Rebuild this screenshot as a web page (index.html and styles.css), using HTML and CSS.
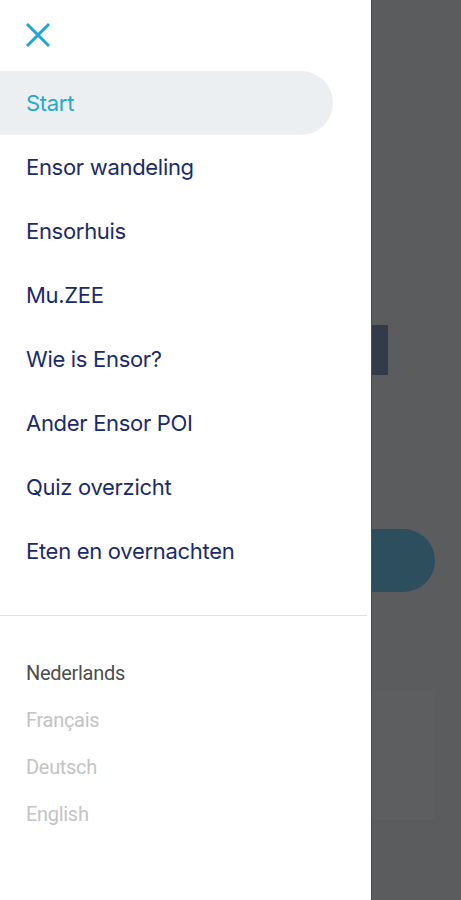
FILE: index.html
```html
<!DOCTYPE html>
<html>
    <head>
        <title>Ensor</title>
        <link rel="stylesheet" href="styles.css">
    </head>
    <body>
        <div class="screen">
            <div class="drawer">
                <div class="drawerHeader">
                    <button class="closeButton" type="button" aria-label="Sluiten">
                        <svg width="26" height="26" viewBox="0 0 26 26">
                            <path d="M2 2 L24 24 M24 2 L2 24" stroke="#1ea5d3" stroke-width="3" fill="none"/>
                        </svg>
                    </button>
                </div>

                <ul class="menu">
                    <li class="menuItem active">Start</li>
                    <li class="menuItem">Ensor wandeling</li>
                    <li class="menuItem">Ensorhuis</li>
                    <li class="menuItem">Mu.ZEE</li>
                    <li class="menuItem">Wie is Ensor?</li>
                    <li class="menuItem">Ander Ensor POI</li>
                    <li class="menuItem">Quiz overzicht</li>
                    <li class="menuItem">Eten en overnachten</li>
                </ul>

                <hr class="divider">

                <ul class="languages">
                    <li class="language current">Nederlands</li>
                    <li class="language">Français</li>
                    <li class="language">Deutsch</li>
                    <li class="language">English</li>
                </ul>
            </div>

            <div class="backdrop">
                <div class="tag"></div>
                <div class="pill"></div>
                <div class="card"></div>
            </div>
        </div>
    </body>
</html>
```

FILE: styles.css
```css
body {
    margin: 0;
    background: #5b5c5d;
}

.screen {
    display: flex;
    height: 900px;
    overflow: hidden;
}

.drawer {
    width: 372px;
    flex-shrink: 0;
    background: #ffffff;
    border-right: 1px solid #4a4b4c;
    box-sizing: border-box;
}

.drawerHeader {
    height: 71px;
    display: flex;
    align-items: center;
    padding-left: 25px;
}

.closeButton {
    border: none;
    background: none;
    padding: 0;
    margin-top: -1px;
    display: flex;
}

.menu {
    list-style: none;
    margin: 0;
    padding: 0;
}

.menuItem {
    height: 64px;
    width: 333px;
    box-sizing: border-box;
    display: flex;
    align-items: center;
    padding-left: 26px;
    font-family: Inter, "Noto Sans", sans-serif;
    font-size: 22px;
    letter-spacing: -0.3px;
    color: #1b2b6a;
}

.menuItem.active {
    background: #ebeff2;
    border-radius: 0 32px 32px 0;
    color: #27a8d0;
}

.divider {
    border: none;
    border-top: 1px solid #e2e2e2;
    margin: 32px 4px 0 0;
}

.languages {
    list-style: none;
    margin: 33px 0 0 0;
    padding: 0;
}

.language {
    height: 47px;
    display: flex;
    align-items: center;
    padding-left: 26px;
    font-family: Roboto, "Noto Sans", sans-serif;
    font-size: 20px;
    letter-spacing: -0.3px;
    color: #c3c3c3;
}

.language.current {
    color: #4d4d4d;
}

.backdrop {
    flex: 1;
    background: #5b5c5d;
}

.tag {
    margin-top: 325px;
    width: 16px;
    height: 50px;
    background: #333b4a;
}

.pill {
    margin-top: 154px;
    width: 63px;
    height: 63px;
    background: #2d4e5d;
    border-radius: 0 32px 32px 0;
}

.card {
    margin-top: 98px;
    width: 63px;
    height: 130px;
    background: #5d5e5f;
}
```
